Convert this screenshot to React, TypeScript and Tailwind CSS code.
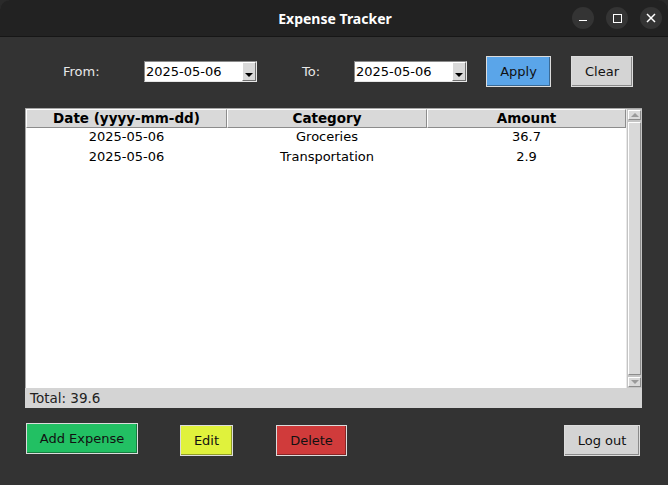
import React from 'react';

const expenses = [
  { date: '2025-05-06', category: 'Groceries', amount: '36.7' },
  { date: '2025-05-06', category: 'Transportation', amount: '2.9' },
];

const font = "font-['DejaVu_Sans',sans-serif]";

function DateBox({ value }: { value: string }) {
  return (
    <div className="w-[113px] h-[21px] bg-white border border-t-[#8a8a8a] border-l-[#8a8a8a] border-r-[#e6e6e6] border-b-[#e6e6e6] flex items-center">
      <span className="pl-[1px] text-[13px] text-black flex-1 leading-none">{value}</span>
      <div className="w-[14px] h-[19px] bg-[#d9d9d9] border border-t-white border-l-white border-r-[#6e6e6e] border-b-[#6e6e6e] flex items-end justify-center pb-[3px]">
        <div className="w-0 h-0 border-l-[4px] border-r-[4px] border-t-[4px] border-l-transparent border-r-transparent border-t-black" />
      </div>
    </div>
  );
}

function TkButton({ label, className }: { label: string; className: string }) {
  return (
    <button
      className={`h-[31px] border border-[#dcdcdc] shadow-[inset_-1px_-1px_0_rgba(0,0,0,0.35)] text-[13px] text-[#111] flex items-center justify-center ${className}`}
    >
      {label}
    </button>
  );
}

function HeaderCell({ label, w }: { label: string; w: string }) {
  return (
    <div className={`${w} h-[19px] bg-[#d9d9d9] border border-t-white border-l-white border-r-[#8c8c8c] border-b-[#8c8c8c] flex items-center justify-center text-[13.5px] font-bold text-black leading-none`}>
      {label}
    </div>
  );
}

export default function App() {
  return (
    <div className={`w-[668px] h-[485px] bg-[#2a2a2a] ${font}`}>
      <div className="w-full h-full bg-[#333333] rounded-t-[10px] overflow-hidden flex flex-col">
        {/* title bar */}
        <div className="h-[37px] bg-[#222222] border-b border-[#161616] flex items-center relative">
          <div className="flex-1 text-center text-white text-[14px] font-bold font-['Noto_Sans',sans-serif] pl-[2px]">
            Expense Tracker
          </div>
          <div className="absolute right-[6px] top-[7px] flex gap-[12px]">
            <div className="w-[22px] h-[22px] rounded-full bg-[#343434] flex items-center justify-center">
              <div className="w-[8px] h-[1.5px] bg-white mt-[5px]" />
            </div>
            <div className="w-[22px] h-[22px] rounded-full bg-[#343434] flex items-center justify-center">
              <div className="w-[9px] h-[9px] border-[1.5px] border-white" />
            </div>
            <div className="w-[22px] h-[22px] rounded-full bg-[#343434] flex items-center justify-center">
              <svg width="10" height="10" viewBox="0 0 10 10">
                <path d="M1 1L9 9M9 1L1 9" stroke="white" strokeWidth="1.5" />
              </svg>
            </div>
          </div>
        </div>

        {/* filter row */}
        <div className="mt-[19px] h-[31px] flex items-center pl-[63px]">
          <span className="w-[81px] text-[13px] text-[#e8e8e8]">From:</span>
          <DateBox value="2025-05-06" />
          <span className="ml-[45px] w-[52px] text-[13px] text-[#e8e8e8]">To:</span>
          <DateBox value="2025-05-06" />
          <TkButton label="Apply" className="ml-[19px] w-[65px] h-[30px] bg-[#5aa5e9]" />
          <TkButton label="Clear" className="ml-[20px] w-[62px] h-[30px] bg-[#d4d4d4]" />
        </div>

        {/* table */}
        <div className="mt-[21px] ml-[25px] w-[617px] h-[300px] flex flex-col">
          <div className="h-[280px] flex border-t border-l border-[#a8a8a8] bg-white">
            <div className="flex-1 flex flex-col">
              <div className="flex">
                <HeaderCell label="Date (yyyy-mm-dd)" w="w-[201px]" />
                <HeaderCell label="Category" w="w-[200px]" />
                <HeaderCell label="Amount" w="w-[199px]" />
              </div>
              <div className="-mt-[1px]">
                {expenses.map((e, i) => (
                  <div key={i} className="flex h-[20px] items-center text-[13px] text-black">
                    <div className="w-[201px] text-center">{e.date}</div>
                    <div className="w-[200px] text-center">{e.category}</div>
                    <div className="w-[199px] text-center">{e.amount}</div>
                  </div>
                ))}
              </div>
            </div>
            <div className="w-[16px] bg-[#c4c4c4] border-l border-[#e8e8e8] p-[1px] flex flex-col gap-[2px]">
              <div className="h-[10px] bg-[#d9d9d9] border border-t-white border-l-white border-r-[#8c8c8c] border-b-[#8c8c8c] flex items-center justify-center">
                <div className="w-0 h-0 border-l-[4px] border-r-[4px] border-b-[4px] border-l-transparent border-r-transparent border-b-[#9a9a9a]" />
              </div>
              <div className="flex-1 bg-[#d9d9d9] border border-t-white border-l-white border-r-[#8c8c8c] border-b-[#8c8c8c]" />
              <div className="h-[10px] bg-[#d9d9d9] border border-t-white border-l-white border-r-[#8c8c8c] border-b-[#8c8c8c] flex items-center justify-center">
                <div className="w-0 h-0 border-l-[4px] border-r-[4px] border-t-[4px] border-l-transparent border-r-transparent border-t-[#9a9a9a]" />
              </div>
            </div>
          </div>
          <div className="h-[20px] bg-[#d4d4d4] flex items-center pl-[5px] text-[13.5px] text-[#222]">
            Total: 39.6
          </div>
        </div>

        {/* bottom buttons */}
        <div className="mt-[15px] flex items-start pl-[26px]">
          <TkButton label="Add Expense" className="w-[112px] bg-[#22c063]" />
          <TkButton label="Edit" className="ml-[42px] mt-[2px] w-[53px] bg-[#e0f23c]" />
          <TkButton label="Delete" className="ml-[43px] mt-[2px] w-[71px] bg-[#d03b3b]" />
          <TkButton label="Log out" className="ml-[217px] mt-[2px] w-[76px] bg-[#d4d4d4]" />
        </div>
      </div>
    </div>
  );
}
